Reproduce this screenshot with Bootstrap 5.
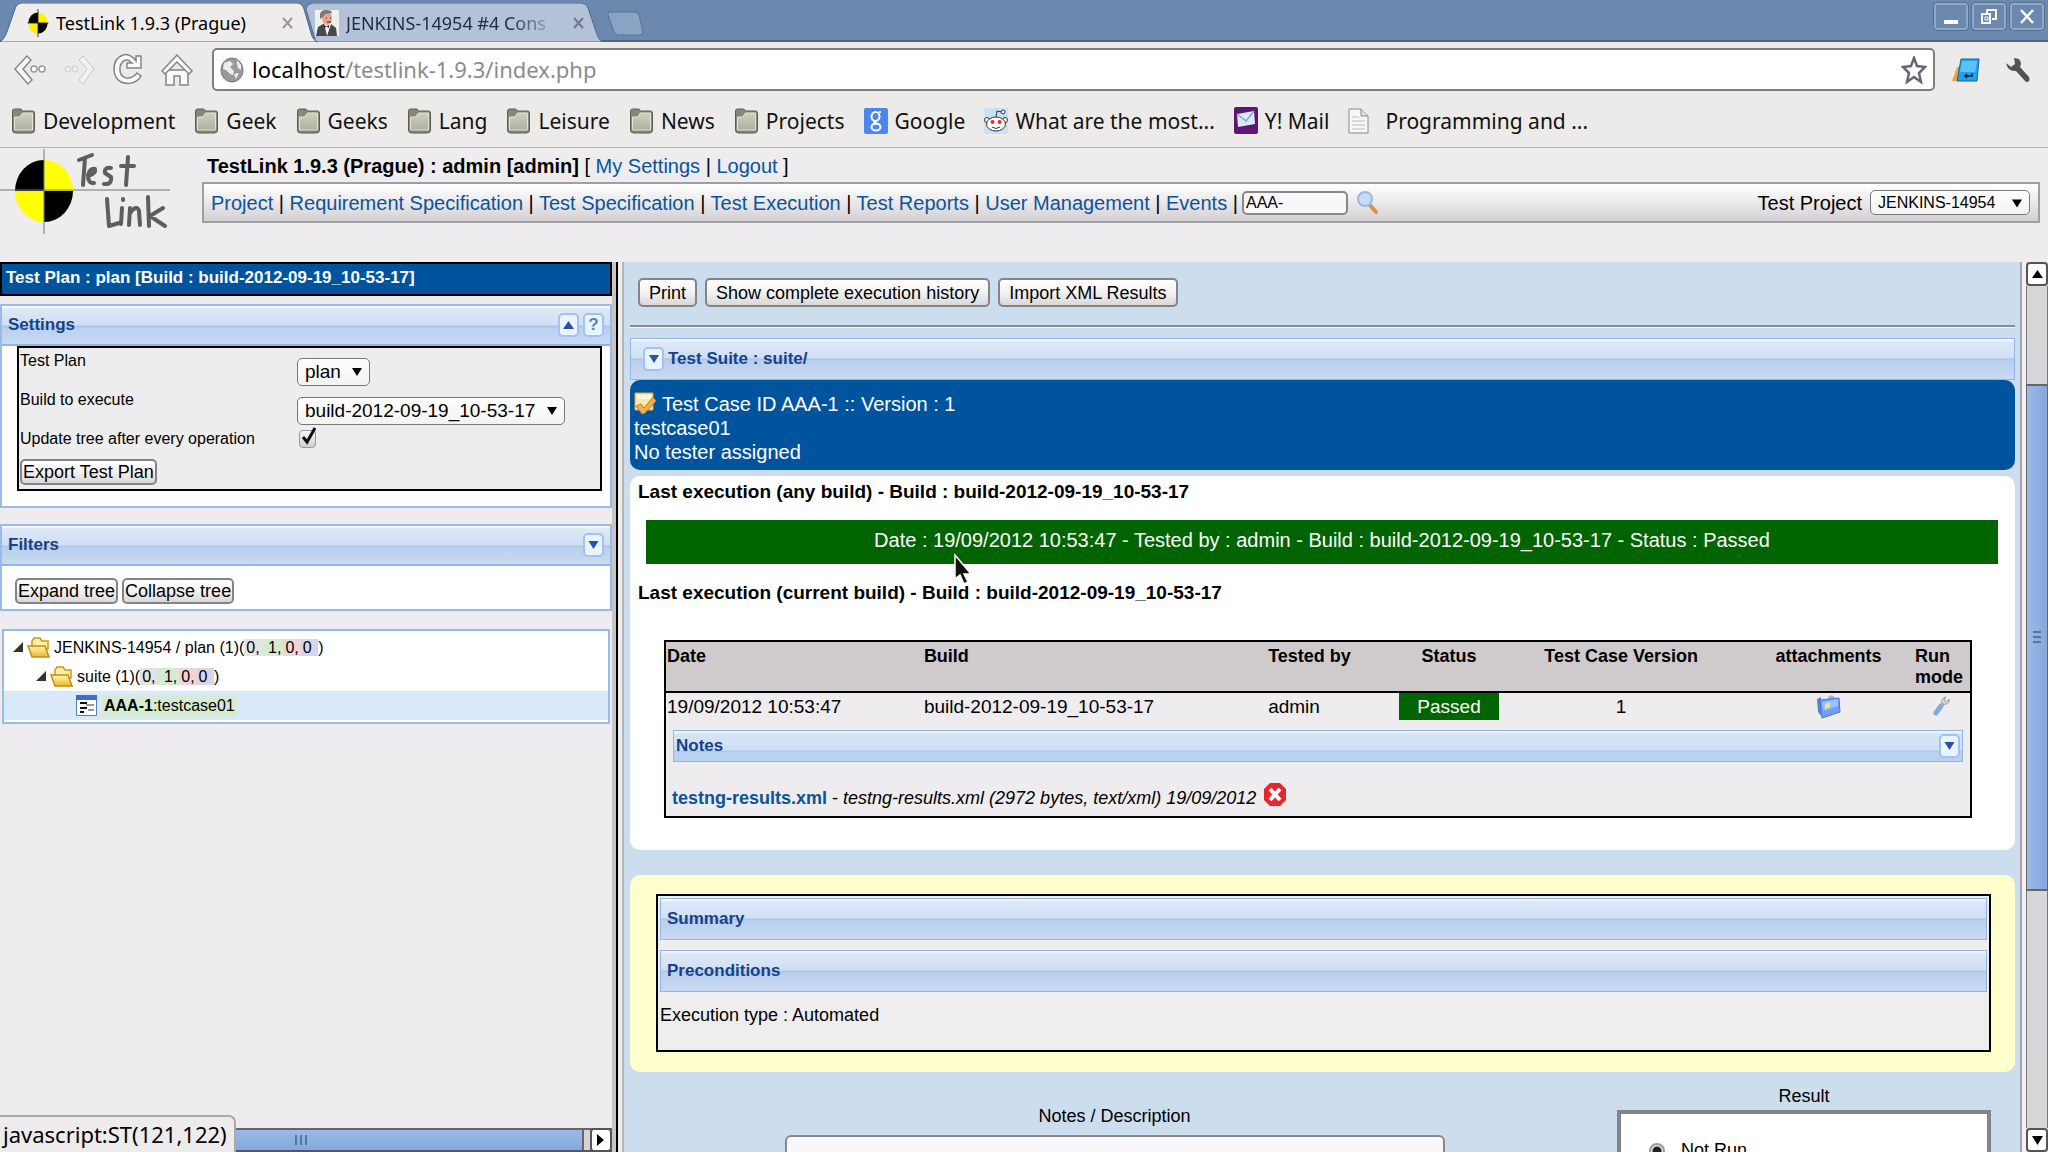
<!DOCTYPE html>
<html lang="en">
<head>
<meta charset="utf-8">
<meta name="viewport" content="width=device-width, initial-scale=1">
<title>TestLink 1.9.3 (Prague)</title>
<link href="https://cdn.jsdelivr.net/npm/bootstrap@5.3.0/dist/css/bootstrap.min.css" rel="stylesheet">
<script src="https://cdn.jsdelivr.net/npm/bootstrap@5.3.0/dist/js/bootstrap.bundle.min.js"></script>
<style>
body{height:100vh;overflow:hidden;background:#eeecee;color:#000;font:18px/21px "Liberation Sans",Arial,sans-serif}
a{color:#0a5499;text-decoration:none}
svg{display:block;flex:none}
button{color:inherit}
.chrome{font-family:"Noto Sans","Open Sans",sans-serif;background:#edebe9}
.tabstrip{height:42px;background:#6c88ae;border-bottom:2px solid #4c6585;padding-top:3px}
.tab-item{height:39px;position:relative;font-size:18px;line-height:36px;white-space:nowrap}
.tab-item>svg.tab-shape{position:absolute;left:0;top:0;width:100%;height:39px}
.tab-item>*{position:relative}
.tab-a{width:318px;padding:0 0 0 27px;z-index:2}
.tab-b{width:300px;margin-left:-12px;padding-left:9px}
.tab-t{margin-left:7px}
.tab-b .tab-t{color:#1f2c40;-webkit-mask-image:linear-gradient(90deg,#000 82%,rgba(0,0,0,.25))}
.tab-x{border:0;background:none;padding:0;margin-right:25px}
.tab-b .tab-x{margin-right:22px}
.winbtn{width:34px;height:27px;border:2px solid #8ea8ca;outline:1px solid #56708f;border-radius:3px;background:#6c88ae;padding:0;display:grid;place-items:center}
.toolbar{height:52px;padding:3px 17px 0 12px}
.tool{border:0;background:none;padding:0}
.urlbox{height:43px;border:2px solid #7f7f7c;border-radius:5px;background:#fff;font-size:22px;line-height:37px;padding:0 6px;margin-left:2px}
.urlbox input{border:0;outline:0;padding:0;width:320px;color:#8b8b8b;background:none;line-height:37px}
.bookmarks{height:54px;border-bottom:1px solid #b3b1b3;font-size:21px;line-height:30px;padding-left:11px;gap:19px}
.bookmarks a{color:#111;display:flex;align-items:center;gap:7px;white-space:nowrap}
.apphead{height:114px;font-size:20px;line-height:24px}
.userline{padding:6px 0 4px 5px}
.menubar{height:41px;border:2px solid #a09ea0;background:linear-gradient(#fff,#efedef 40%,#d2d0d2);margin-right:8px;padding:0 8px 0 7px}
.menubar a{white-space:nowrap}
.fld{border:2px solid #8a888a;border-radius:5px;background:#f9f7fa;font-size:16px;line-height:20px;padding:0 2px;color:#000;width:106px}
.sel{position:relative;display:inline-block}
.sel select{appearance:none;border:1px solid #777;border-radius:5px;background:linear-gradient(#fff,#f3f3f3);color:#000;padding:0 28px 0 7px;height:28px;line-height:24px;font-size:19px;display:block}
.sel svg{position:absolute;right:8px;top:9px;pointer-events:none}
.sel-sm select{font-size:16px;height:25px;line-height:21px;padding-right:22px;width:160px}
.btn-old{border:2px solid #858385;border-radius:5px;background:linear-gradient(#fff,#f2f2f2 50%,#d9d7d9);font-size:18px;line-height:22px;color:#000;height:29px;padding:0 9px}
.btn-tight{height:26px;line-height:20px;padding:0 1px}
.left-frame{width:612px}
.planbar{background:#00549e;color:#fff;font-weight:700;font-size:17px;border:2px solid #000;height:34px;line-height:28px;padding-left:4px}
.xpanel{border:2px solid #9cb9ec;background:#fff}
.xhead{height:42px;border:1px solid #92b4e6;color:#15428b;font-weight:700;font-size:17px;line-height:20px;background:linear-gradient(#fff 0,#dbe8f8 3px,#d2dff3 19px,#a9c3e8 20px,#b9d0ee 22px,#c9daf2);padding:0 6px}
.xpanel .xhead{border-width:0 0 2px;height:40px}
.xbtn{width:21px;height:24px;border:2px solid #a5c1ee;border-radius:5px;background:#e9f4ff;padding:0;display:grid;place-items:center;color:#4d88bb;font-weight:700;line-height:18px}
.setbox{border:2px solid #000;background:#eeeded;margin:0 8px 15px 15px;height:145px;font-size:16px;line-height:20px;padding:3px 1px}
.setrow{height:39px}
.setrow>label,.setcheck>label{width:277px}
.setrow .ctl{padding-top:7px}
.setcheck{margin-bottom:10px}
.tickbox{appearance:none;width:17px;height:18px;border:1px solid #999;border-radius:4px;background:linear-gradient(#fafafa,#cfcfcf);margin:0;display:block}
.tickwrap{position:relative;margin:0 0 0 2px}
.tickwrap svg{position:absolute;left:1px;top:-4px;pointer-events:none}
.treebtns{padding:12px 13px 5px}
.tree{border:2px solid #9cb9ec;background:#fff;margin:18px 2px 0;font-size:16px;line-height:22px;padding:2px 0}
.trow{height:29px;gap:3px}
.trow:nth-child(1){padding-left:9px}
.trow:nth-child(2){padding-left:32px}
.trow:nth-child(3){padding-left:72px;background:#d9e8fb;gap:5px}
.k0{background:#e6e3e6}.k1{background:#d5ecd2}.k2{background:#efd5d5}.k3{background:#d6d5ec}
.k0,.k1,.k2,.k3{padding:0 2px}
.divider{width:12px;background:#eee;border-left:4px solid #c6c6c6;position:relative}
.divider::before{content:"";position:absolute;left:0;top:0;bottom:0;width:2px;background:#000}
.divider::after{content:"";position:absolute;right:0;top:0;bottom:0;width:2px;background:#b5b5b5}
.hscroll{height:24px;background:#d6d4d6;border-top:2px solid #666;border-bottom:2px solid #556}
.hthumb{background:linear-gradient(#9bbae6,#84a8dc);border-right:2px solid #666;margin-right:6px;padding-left:22px}
.sbtn{border:2px solid #555;border-radius:4px;background:#fff;padding:0;display:grid;place-items:center;width:22px;height:24px}
.statusline{position:absolute;left:0;bottom:0;z-index:5;font:22px/34px "Noto Sans",sans-serif;background:#edebeb;border:2px solid #aaa;border-left:0;border-bottom:0;border-radius:0 7px 0 0;padding:0 7px 0 3px;height:37px}
.right-frame{background:#ccdded;padding:16px 5px 0 6px;overflow:hidden}
.rule{height:3px;border-top:2px solid #8c8a92;background:#f4f6fb;margin:18px 0 10px}
.casebox{background:#00549e;color:#fff;font-size:20px;line-height:24px;border-radius:10px;height:90px;padding:12px 4px 0}
.lastpanel{background:#fff;border-radius:10px;margin-top:6px;height:374px;padding:4px 17px 0 16px}
.lasthead{font-size:19px;line-height:24px;font-weight:700;margin:0 0 0 -8px}
.okbar{background:#006400;color:#fff;font-size:20px;line-height:40px;height:44px;text-align:center;margin:16px 0 17px}
.gridbox{border:2px solid #000;background:#eeecee;margin:35px 26px 0 18px;height:178px}
.gridbox table{width:100%;table-layout:fixed;border-collapse:collapse}
.gridbox th{background:#cfcbcd;height:50px;font-size:18px;line-height:21px;vertical-align:top;padding:4px 1px 0;border-bottom:2px solid #000}
.gridbox td{font-size:19px;line-height:21px;height:28px;padding:0 1px 1px;vertical-align:middle}
.gridbox .mid{text-align:center}
.gridbox td.passed{background:#006400;color:#fff}
.notesbar{height:32px;margin:10px 7px 0;padding:0 2px;background:linear-gradient(#fff 0,#d6e5f5 3px,#cfdff3 19px,#a9c6e6 20px,#bad2f2 22px)}
.fileline{margin:18px 0 0 6px}
.yellowbox{background:#ffffce;border-radius:10px;margin-top:25px;padding:19px 24px 20px 26px}
.sumbox{border:2px solid #000;background:#eee;height:158px;padding:2px 2px 0}
.sumbox .xhead{margin-bottom:10px;line-height:40px}
.exectype{padding-top:3px}
.noteswrap{padding-top:34px}
.noteswrap label{display:block;text-align:center;margin-bottom:8px}
.resultwrap{padding:14px 0 0 18px}
.resultbox{border:4px solid #858385;background:#fff;width:374px;padding:26px 0 0 28px;height:90px;margin-top:3px}
.notearea{width:660px;height:60px;border:2px solid #8a888a;border-radius:6px;background:#f9f7fa;resize:none;display:block}
.radio-old{appearance:none;width:16px;height:16px;border-radius:50%;border:2px solid #999;background:radial-gradient(#222 0 4px,#e8e8e8 5px);margin:0}
.gap-strip{width:6px;background:#f3f1f3;border-left:2px solid #a8a6ac}
.vscroll{width:22px;background:#d8d6d8}
.vthumb{border:solid #666;border-width:2px 1px;background:linear-gradient(90deg,#9bbae6,#84a8dc);height:507px}
.vtrack{border:solid #777;border-width:0 1px}
.pointer{position:absolute;left:953px;top:553px;z-index:6}
</style>
</head>
<body class="d-flex flex-column">
<svg width="0" height="0" class="position-absolute" aria-hidden="true">
<defs>
<linearGradient id="fg" x1="0" y1="0" x2="0" y2="1"><stop offset="0" stop-color="#cfd0c0"/><stop offset="1" stop-color="#aeb09c"/></linearGradient>
<linearGradient id="yg" x1="0" y1="0" x2="0" y2="1"><stop offset="0" stop-color="#fff7b0"/><stop offset="1" stop-color="#e8b92e"/></linearGradient>
<symbol id="bf" viewBox="0 0 24 26"><path d="M1 3q0-2 2-2h6q1 0 2 2h10q2 0 2 2v17q0 3-3 3H4q-3 0-3-3z" fill="#85877a" stroke="#5c5e52"/><path d="M3 9h5l3-4h10v17H3z" fill="url(#fg)" stroke="#e4e4d6"/></symbol>
<symbol id="yf" viewBox="0 0 24 21"><path d="M5 4l2-3h6l2 3h6v8H5z" fill="#fdf0a0" stroke="#c8991c" stroke-width="1.5"/><path d="M1 9h17l4 11H5z" fill="url(#yg)" stroke="#c48c12" stroke-width="1.5"/></symbol>
<symbol id="dn" viewBox="0 0 10 8"><path d="M0 0h10L5 8z" fill="currentColor"/></symbol>
<symbol id="tl" viewBox="0 0 24 32"><ellipse cx="12" cy="16" rx="11" ry="12" fill="#fff000"/><path d="M12 16V4A11 12 0 0 0 1 16zM12 16v12a11 12 0 0 0 11-12z" fill="#000"/><path d="M12 0v32M0 16h24" stroke="#222"/></symbol>
</defs></svg>

<header class="chrome flex-shrink-0">
<div class="tabstrip d-flex">
<div class="tab-item tab-a d-flex align-items-center">
<svg class="tab-shape" viewBox="0 0 318 39" preserveAspectRatio="none"><path d="M0 39Q5 36 8 26L15 6Q17 0 22 0H297Q302 0 304 6L311 30Q313 38 318 39z" fill="#efedec" stroke="#4c6585"/></svg>
<svg width="22" height="28"><use href="#tl"/></svg><span class="tab-t me-auto">TestLink 1.9.3 (Prague)</span>
<button class="tab-x" aria-label="Close tab"><svg width="11" height="12" viewBox="0 0 11 12"><path d="M1 1l9 10M10 1L1 11" stroke="#999" stroke-width="2"/></svg></button>
</div>
<div class="tab-item tab-b d-flex align-items-center">
<svg class="tab-shape" viewBox="0 0 306 39" preserveAspectRatio="none"><path d="M0 6Q2 0 8 0H280Q286 0 288 6L297 32Q299 38 304 39H10z" fill="#b3c2d8" stroke="#506a8c"/></svg>
<svg width="24" height="26" viewBox="0 0 24 26"><path d="M0 0h24v26H0z" fill="#eef0ee"/><path d="M1 26l2-9 5-3 8 0 5 4 1 8z" fill="#4a474b"/><path d="M9 13l3 13 4-12z" fill="#fff"/><path d="M9 15l5 3v-3l-5 3z" fill="#222"/><ellipse cx="12" cy="8" rx="5" ry="7" fill="#e2a894"/><path d="M5 9V4q1-4 6-4 6 0 6 3l-7 1-2 3z" fill="#777"/><path d="M11 8h1M15 8h1M12 12h4" stroke="#933" stroke-width="1.500"/></svg>
<span class="tab-t me-auto">JENKINS-14954 #4 Cons</span>
<button class="tab-x" aria-label="Close tab"><svg width="11" height="12" viewBox="0 0 11 12"><path d="M1 1l9 10M10 1L1 11" stroke="#778" stroke-width="2"/></svg></button>
</div>
<button class="tool align-self-start mt-2" aria-label="New tab"><svg width="38" height="25" viewBox="0 0 38 25"><path d="M3 1h27q2 0 3 3l4 17q0 3-3 3H12q-3 0-4-3L2 4q0-3 1-3z" fill="#8aa3c4" stroke="#56708f"/></svg></button>
<div class="d-flex gap-1 ms-auto me-1">
<button class="winbtn" aria-label="Minimize"><svg width="16" height="20"><path d="M1 15h14" stroke="#fff" stroke-width="4"/></svg></button>
<button class="winbtn" aria-label="Restore"><svg width="16" height="16" viewBox="0 0 16 16" fill="none" stroke="#fff" stroke-width="2"><path d="M6 4V1h9v9h-4"/><path d="M1 5h8v9H1z"/><path d="M4 8h3v3H4z" stroke-width="1"/></svg></button>
<button class="winbtn" aria-label="Close"><svg width="14" height="15" viewBox="0 0 14 15"><path d="M1 1l12 13M13 1L1 14" stroke="#fff" stroke-width="2.500"/></svg></button>
</div>
</div>
<div class="toolbar d-flex align-items-center">
<button class="tool me-3" aria-label="Back"><svg width="36" height="34" viewBox="0 0 36 34"><path d="M15 3l4 4-8 9 9 11-4 4L3 16z" fill="#fafafa" stroke="#888" stroke-width="1.5"/><circle cx="22" cy="16" r="3" fill="#fff" stroke="#999" stroke-width="1.500"/><circle cx="30" cy="16" r="3" fill="#fff" stroke="#999" stroke-width="1.500"/></svg></button>
<button class="tool me-3" aria-label="Forward"><svg width="32" height="34" viewBox="0 0 32 34"><path d="M19 3l-4 4 8 9-8 11 4 4 11-15z" fill="#f2f2f2" stroke="#c4c4c4"/><circle cx="4" cy="16" r="3" fill="none" stroke="#ccc"/><circle cx="11" cy="16" r="3" fill="none" stroke="#ccc"/></svg></button>
<button class="tool me-3" aria-label="Reload"><svg width="32" height="36" viewBox="0 0 32 36"><path d="M24 4v5Q18 1 11 3 2 6 2 17q0 9 7 13 10 4 18-3l2-3-4-3q-5 6-11 5-7-2-6-11 2-8 8-7l4 3h-5v5h14V4z" fill="#fafafa" stroke="#858585" stroke-width="1.500"/></svg></button>
<button class="tool me-3" aria-label="Home"><svg width="34" height="34" viewBox="0 0 34 34" fill="#fafafa" stroke="#858585" stroke-width="1.500"><path d="M6 17h22v15h-8v-9h-6v9H6z"/><path d="M17 2L2 18l3 3L17 9l12 12 3-3z"/></svg></button>
<div class="urlbox d-flex align-items-center flex-grow-1">
<svg width="24" height="26" viewBox="0 0 24 26" class="me-2"><ellipse cx="12" cy="13" rx="11" ry="12" fill="#9a9a9a" stroke="#777"/><path d="M4 6l6-2 3 3-3 3 4 4-1 4-3-1-4-4-3-1zM17 3l4 5v5l-3-2-1-4zM14 17l5-1-3 6z" fill="#eee"/></svg>
<label class="text-black" for="url">localhost</label><input id="url" value="/testlink-1.9.3/index.php">
<button class="tool ms-auto" aria-label="Bookmark"><svg width="26" height="28" viewBox="0 0 26 28"><path d="M13 2l3 8 8 1-6 6 2 9-7-5-7 5 2-9-6-6 8-1z" fill="#fff" stroke="#63677b" stroke-width="2.500"/></svg></button>
</div>
<button class="tool ms-3" aria-label="Reader"><svg width="30" height="26" viewBox="0 0 30 26"><path d="M1 24L6 10h6v14z" fill="#f0a53c"/><path d="M10 2h18l-2 22H6z" fill="#21a0f0" stroke="#1263a8"/><path d="M11 4h15l-2 11H9z" fill="#5cc3fa"/><path d="M21 16v3h-7m2-2l-2 2 2 2" fill="none" stroke="#123" stroke-width="1.500"/></svg></button>
<button class="tool ms-4" aria-label="Settings"><svg width="26" height="27" viewBox="0 0 26 27"><path d="M1 7l5 4 4-3-1-6q7 0 7 6l-1 3 9 10q2 5-3 5L11 15q-8 1-10-8z" fill="#55534f"/></svg></button>
</div>
<nav class="bookmarks d-flex align-items-center" aria-label="Bookmarks">
<a href="#"><svg width="25" height="26"><use href="#bf"/></svg>Development</a>
<a href="#"><svg width="25" height="26"><use href="#bf"/></svg>Geek</a>
<a href="#"><svg width="25" height="26"><use href="#bf"/></svg>Geeks</a>
<a href="#"><svg width="25" height="26"><use href="#bf"/></svg>Lang</a>
<a href="#"><svg width="25" height="26"><use href="#bf"/></svg>Leisure</a>
<a href="#"><svg width="25" height="26"><use href="#bf"/></svg>News</a>
<a href="#"><svg width="25" height="26"><use href="#bf"/></svg>Projects</a>
<a href="#"><svg width="24" height="26" viewBox="0 0 24 26"><rect width="24" height="26" rx="2" fill="#4a86ee"/><g fill="none" stroke="#fff" stroke-width="2"><ellipse cx="11.500" cy="8.500" rx="4" ry="4.500"/><ellipse cx="12" cy="19" rx="4.500" ry="3.500"/><path d="M15 4h2M11 13q-2 2 2 3"/></g></svg>Google</a>
<a href="#"><svg width="24" height="26" viewBox="0 0 24 26"><rect width="24" height="26" fill="#c9e1f6"/><g fill="#fff" stroke="#333"><path d="M12 9l1-6 5 1" fill="none"/><circle cx="19" cy="4" r="2"/><circle cx="3" cy="12" r="2.500"/><circle cx="21" cy="12" r="2.500"/><ellipse cx="12" cy="16" rx="9.500" ry="7"/></g><circle cx="8.500" cy="14" r="2" fill="#f22"/><circle cx="15.500" cy="14" r="2" fill="#f22"/><path d="M8 19q4 3 8 0" fill="none" stroke="#333"/></svg>What are the most...</a>
<a href="#"><svg width="24" height="27" viewBox="0 0 24 27"><rect width="24" height="27" rx="2" fill="#5c1770"/><path d="M3 7l17-3 1 13-17 3z" fill="#dbe8f8"/><path d="M3 7l9 7 8-10" fill="none" stroke="#8aa2c4" stroke-width="1.500"/></svg>Y! Mail</a>
<a href="#" class="gap-3"><svg width="21" height="26" viewBox="0 0 21 26"><path d="M1 1h12l7 7v17H1z" fill="#f7f7f7" stroke="#888"/><path d="M13 1v7h7" fill="#ddd" stroke="#888"/><path d="M4 9h7M4 13h13M4 17h13M4 21h13" stroke="#bbb"/></svg>Programming and ...</a>
</nav>
</header>

<section class="apphead d-flex flex-shrink-0">
<svg width="202" height="88" viewBox="0 0 202 88"><ellipse cx="44" cy="43" rx="29" ry="31" fill="#ff0"/><path d="M44 43V12A29 31 0 0 0 15 43zM44 43v31a29 31 0 0 0 29-31z" fill="#000"/><path d="M44 1v85M0 42h170" stroke="#777"/><g fill="none" stroke="#5e5e5e" stroke-width="4" stroke-linecap="round" stroke-linejoin="round"><path d="M79 12l13-5M85 10l-2 27M88 28q8-2 7-7-5-1-7 6 0 9 6 8M111 20q-7-1-6 5l6 4q1 8-7 7M121 18h13M128 9l-2 28"/><path d="M107 51l2 27 10-3M122 60l-1 16M123 51v1M130 60l-1 17M130 65q7-9 9-2l1 14M148 49l1 29M163 60l-13 8 15 10"/></g></svg>
<div class="flex-grow-1">
<div class="userline"><b>TestLink 1.9.3 (Prague) : admin [admin]</b> [ <a href="#">My Settings</a> | <a href="#">Logout</a> ]</div>
<div class="menubar d-flex align-items-center">
<nav><a href="#">Project</a> | <a href="#">Requirement Specification</a> | <a href="#">Test Specification</a> | <a href="#">Test Execution</a> | <a href="#">Test Reports</a> | <a href="#">User Management</a> | <a href="#">Events</a> |</nav>
<input class="fld ms-1" value="AAA-" aria-label="Test case ID">
<button class="tool ms-2" aria-label="Search"><svg width="22" height="24" viewBox="0 0 22 24"><path d="M13 13l7 8" stroke="#d9944a" stroke-width="4" stroke-linecap="round"/><circle cx="9" cy="8" r="7" fill="#c4dcf8" stroke="#9ab8e4" stroke-width="2"/></svg></button>
<label class="ms-auto me-2" for="proj">Test Project</label>
<span class="sel sel-sm"><select id="proj"><option>JENKINS-14954</option></select><svg width="10" height="9"><use href="#dn"/></svg></span>
</div></div>
</section>

<main class="d-flex flex-grow-1 overflow-hidden">
<aside class="left-frame d-flex flex-column flex-shrink-0">
<div class="planbar">Test Plan : plan [Build : build-2012-09-19_10-53-17]</div>
<section class="xpanel mt-2">
<div class="xhead d-flex align-items-center gap-1"><span class="me-auto">Settings</span><button class="xbtn" aria-label="Collapse"><svg width="11" height="8" viewBox="0 0 11 8"><path d="M0 8h11L5.500 0z" fill="#2a4fae"/></svg></button><button class="xbtn" aria-label="Help">?</button></div>
<div class="setbox">
<div class="setrow d-flex"><label for="plan">Test Plan</label><div class="ctl"><span class="sel"><select id="plan" style="width:73px"><option>plan</option></select><svg width="10" height="10"><use href="#dn"/></svg></span></div></div>
<div class="setrow d-flex"><label for="build">Build to execute</label><div class="ctl"><span class="sel"><select id="build"><option>build-2012-09-19_10-53-17</option></select><svg width="10" height="10"><use href="#dn"/></svg></span></div></div>
<div class="setcheck d-flex align-items-center"><label for="upd">Update tree after every operation</label><span class="tickwrap"><input class="tickbox" id="upd" type="checkbox" checked><svg width="18" height="20" viewBox="0 0 18 20"><path d="M3 11l4 5L15 2" fill="none" stroke="#111" stroke-width="3"/></svg></span></div>
<button class="btn-old btn-tight">Export Test Plan</button>
</div>
</section>
<section class="xpanel mt-3">
<div class="xhead d-flex align-items-center"><span class="me-auto">Filters</span><button class="xbtn" aria-label="Expand"><svg width="11" height="8" style="color:#2a4fae"><use href="#dn"/></svg></button></div>
<div class="treebtns d-flex gap-1"><button class="btn-old btn-tight">Expand tree</button><button class="btn-old btn-tight">Collapse tree</button></div>
</section>
<div class="tree">
<div class="trow d-flex align-items-center"><svg width="11" height="11"><path d="M10 0v10H0z" fill="#333"/></svg><svg width="24" height="21"><use href="#yf"/></svg><span>JENKINS-14954 / plan (1)(<span class="k0">0,</span><span class="k1"> 1,</span><span class="k2">0,</span><span class="k3">0 </span>)</span></div>
<div class="trow d-flex align-items-center"><svg width="11" height="11"><path d="M10 0v10H0z" fill="#333"/></svg><svg width="24" height="21"><use href="#yf"/></svg><span>suite (1)(<span class="k0">0,</span><span class="k1"> 1,</span><span class="k2">0,</span><span class="k3">0 </span>)</span></div>
<div class="trow d-flex align-items-center"><svg width="21" height="21" viewBox="0 0 21 21"><path d="M.5.500h20v20H.5z" fill="#fff" stroke="#5580c0"/><path d="M0 0h21v5H0z" fill="#3f6cc8"/><path d="M4 8h7M4 13h7M4 17h4" stroke="#111" stroke-width="2"/><path d="M10 10h8M12 15h6" stroke="#999" stroke-width="2"/></svg><span class="k1"><b>AAA-1</b>:testcase01</span></div>
</div>
<div class="hscroll d-flex mt-auto"><div class="hthumb flex-grow-1 d-flex align-items-center justify-content-center"><svg width="14" height="10"><path d="M1 0v10M6 0v10M11 0v10" stroke="#56769f" stroke-width="2"/></svg></div><button class="sbtn align-self-center" aria-label="Scroll right"><svg width="8" height="12"><path d="M0 0l7 6-7 6z"/></svg></button></div>
</aside>
<div class="divider flex-shrink-0"></div>
<section class="right-frame flex-grow-1">
<div class="d-flex gap-2 ps-2"><button class="btn-old">Print</button><button class="btn-old">Show complete execution history</button><button class="btn-old">Import XML Results</button></div>
<div class="rule"></div>
<div class="xhead d-flex align-items-center ps-2 gap-1"><button class="xbtn ms-1" aria-label="Expand"><svg width="10" height="8" style="color:#2a4fae"><use href="#dn"/></svg></button><span>Test Suite : suite/</span></div>
<div class="casebox"><div class="d-flex"><svg width="24" height="24" viewBox="0 0 24 24" class="me-1"><path d="M1 1h18v17H1z" fill="#ffe9ad" stroke="#e2a03b"/><path d="M3 3h14v4H3z" fill="#fff8dc"/><path d="M2 14l6 8 3-1L22 9l-3-4-9 11-3-4z" fill="#eeb04c" stroke="#c47c26"/></svg><span>Test Case ID AAA-1 :: Version : 1</span></div><div>testcase01</div><div>No tester assigned</div></div>
<div class="lastpanel">
<h2 class="lasthead">Last execution (any build) - Build : build-2012-09-19_10-53-17</h2>
<div class="okbar">Date : 19/09/2012 10:53:47 - Tested by : admin - Build : build-2012-09-19_10-53-17 - Status : Passed</div>
<h2 class="lasthead">Last execution (current build) - Build : build-2012-09-19_10-53-17</h2>
<div class="gridbox">
<table>
<colgroup><col style="width:19.7%"><col style="width:26.4%"><col style="width:10.1%"><col style="width:7.7%"><col style="width:18.7%"><col style="width:13.1%"><col style="width:4.3%"></colgroup>
<thead><tr><th>Date</th><th>Build</th><th>Tested by</th><th class="mid">Status</th><th class="mid">Test Case Version</th><th class="mid">attachments</th><th>Run mode</th></tr></thead>
<tbody><tr><td>19/09/2012 10:53:47</td><td>build-2012-09-19_10-53-17</td><td>admin</td><td class="mid passed">Passed</td><td class="mid">1</td>
<td><svg class="mx-auto" width="25" height="25" viewBox="0 0 25 25"><path d="M1 5l4-2v19L2 18z" fill="#5684dd"/><path d="M12 3q4-4 7 1l-1 3h-6z" fill="#b7a4f0"/><path d="M4 6l19-2 1 14L6 24z" fill="#6f9ff0" stroke="#4a78cf"/><path d="M6 8l16-3v7L7 17z" fill="#9cc0fa"/><path d="M9 10l5-2v5l-5 2z" fill="#f7e08a"/></svg></td>
<td><svg class="mx-auto" width="18" height="20" viewBox="0 0 18 20"><path d="M3 17l5-7" stroke="#86a8e0" stroke-width="5" stroke-linecap="round"/><path d="M8 10l4-4" stroke="#aaa" stroke-width="3"/><path d="M13 1q-5 1-4 6 3 3 7-1V3l-3 3-2-2z" fill="#ddd" stroke="#999"/></svg></td></tr></tbody>
</table>
<div class="xhead notesbar d-flex align-items-center justify-content-between"><span>Notes</span><button class="xbtn" aria-label="Expand"><svg width="11" height="8" style="color:#2a4fae"><use href="#dn"/></svg></button></div>
<div class="fileline d-flex align-items-center gap-1"><span class="pt-2"><a href="#"><b>testng-results.xml</b></a> - <i>testng-results.xml (2972 bytes, text/xml) 19/09/2012</i></span><button class="tool ms-1" aria-label="Delete attachment"><svg width="22" height="23" viewBox="0 0 22 23"><path d="M6 0h10l6 6v11l-6 6H6l-6-6V6z" fill="#e8262b"/><path d="M6 6l10 11M16 6L6 17" stroke="#fff" stroke-width="4"/></svg></button></div>
</div>
</div>
<div class="yellowbox"><div class="sumbox"><div class="xhead">Summary</div><div class="xhead">Preconditions</div><div class="exectype">Execution type : Automated</div></div></div>
<div class="d-flex justify-content-between pe-4">
<div class="noteswrap mx-auto"><label for="nd">Notes / Description</label><textarea class="notearea" id="nd"></textarea></div>
<div class="resultwrap"><div class="text-center">Result</div><div class="resultbox"><div class="d-flex align-items-center gap-3"><input class="radio-old" type="radio" id="nr" checked><label for="nr">Not Run</label></div></div></div>
</div>
</section>
<div class="gap-strip flex-shrink-0"></div>
<div class="vscroll d-flex flex-column flex-shrink-0">
<button class="sbtn" aria-label="Scroll up"><svg width="11" height="8"><path d="M0 8h11L5.500 0z"/></svg></button>
<div class="vtrack" style="height:11%"></div>
<div class="vthumb d-grid"><svg class="m-auto" width="8" height="14"><path d="M0 2h8M0 7h8M0 12h8" stroke="#56769f" stroke-width="2"/></svg></div>
<div class="vtrack flex-grow-1"></div>
<button class="sbtn" aria-label="Scroll down"><svg width="11" height="9"><path d="M0 0h11L5.500 9z"/></svg></button>
</div>
</main>
<div class="statusline">javascript:ST(121,122)</div>
<svg class="pointer" width="20" height="32" viewBox="0 0 20 32"><path d="M2 2v24l5-4 4 9 4-2-4-8h7z" fill="#111" stroke="#fff" stroke-width="1.500"/></svg>
</body>
</html>
